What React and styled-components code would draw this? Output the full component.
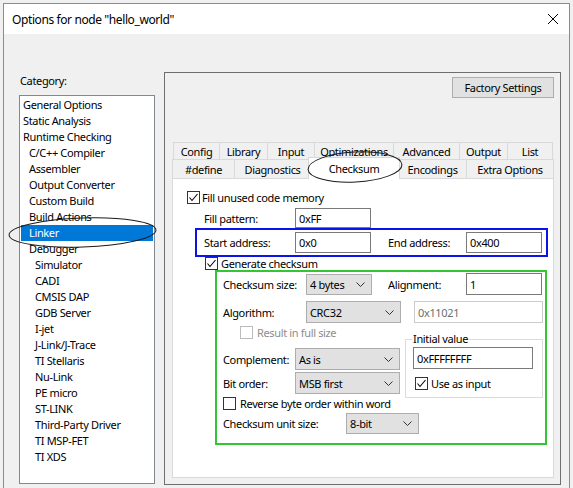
import React from 'react';
import styled, { createGlobalStyle } from 'styled-components';

const GlobalStyle = createGlobalStyle`
  *, *::before, *::after { box-sizing: border-box; }
  html, body {
    margin: 0;
    padding: 0;
    height: 488px;
    overflow: hidden;
    background: #f0f0f0;
  }
  body {
    font-family: "Noto Sans", "Open Sans", sans-serif;
    font-size: 11px;
    letter-spacing: -0.35px;
    color: #000;
  }
`;

const Window = styled.div`
  margin: 3px 0 0 3px;
  width: 567px;
  height: 485px;
  border: 1px solid #8c8c8c;
  border-bottom: none;
  background: #f0f0f0;
  display: flex;
  flex-direction: column;
  overflow: hidden;
`;

const TitleBar = styled.div`
  height: 30px;
  flex: none;
  background: #fff;
  display: flex;
  align-items: center;
  justify-content: space-between;
  padding: 0 11px 0 8px;
  font-size: 12px;
  letter-spacing: -0.4px;
`;

const Body = styled.div`
  display: flex;
  align-items: flex-start;
  gap: 9px;
  padding: 0 8px 0 15px;
`;

const LeftColumn = styled.div`
  position: relative;
  width: 136px;
  flex: none;
  padding-top: 40px;
`;

const Caption = styled.div`
  line-height: 14px;
  height: 14px;
  padding-left: 1px;
`;

const CategoryList = styled.div`
  margin-top: 7px;
  height: 389px;
  border: 1px solid #828790;
  background: #fff;
  padding-top: 1px;
`;

const CategoryItem = styled.div`
  height: 16px;
  line-height: 16px;
  margin: 0 1px;
  padding-left: ${({ $level }) => 2 + $level * 6}px;
  background: ${({ $selected }) => ($selected ? '#0078d7' : 'transparent')};
  color: ${({ $selected }) => ($selected ? '#fff' : '#000')};
  white-space: nowrap;
`;

const Annotation = styled.svg`
  position: absolute;
  left: 0;
  top: 0;
  width: 100%;
  height: 100%;
  overflow: visible;
  pointer-events: none;
  z-index: 5;
`;

const Panel = styled.div`
  width: 397px;
  height: 413px;
  margin-top: 38px;
  flex: none;
  border: 1px solid #6e6e6e;
  padding: 4px 6px 6px 7px;
  display: flex;
  flex-direction: column;
`;

const Button = styled.div`
  align-self: flex-end;
  width: 102px;
  height: 21px;
  background: #e1e1e1;
  border: 1px solid #adadad;
  display: flex;
  align-items: center;
  justify-content: center;
`;

const TabControl = styled.div`
  position: relative;
  margin-top: 44px;
`;

const TabRow = styled.div`
  display: flex;
  padding: ${({ $inset }) => ($inset ? '0 1px' : '0')};
`;

const Tab = styled.div`
  width: ${({ $w }) => $w}px;
  height: ${({ $h }) => $h}px;
  flex: none;
  background: #f0f0f0;
  border-top: 1px solid #d9d9d9;
  border-left: 1px solid #d9d9d9;
  border-right: ${({ $last }) => ($last ? '1px solid #d9d9d9' : 'none')};
  display: flex;
  align-items: center;
  justify-content: center;
  white-space: nowrap;
`;

const ActiveTab = styled.div`
  position: relative;
  z-index: 1;
  width: ${({ $w }) => $w + 4}px;
  height: 22px;
  margin: -2px -2px -1px -2px;
  flex: none;
  background: #fff;
  border: 1px solid #d9d9d9;
  border-bottom: none;
  display: flex;
  align-items: center;
  justify-content: center;
  padding-bottom: 1px;
`;

const TabPage = styled.div`
  height: 300px;
  background: #fff;
  border: 1px solid #d9d9d9;
  display: flex;
  flex-direction: column;
`;

const Row = styled.div`
  display: flex;
  align-items: center;
  flex: none;
  height: ${({ $h }) => $h}px;
  margin-top: ${({ $mt = 0 }) => $mt}px;
  padding-left: ${({ $pl = 0 }) => $pl}px;
  white-space: nowrap;
`;

const Label = styled.span`
  width: ${({ $w }) => ($w ? `${$w}px` : 'auto')};
  margin-left: ${({ $ml = 0 }) => $ml}px;
  flex: none;
  color: ${({ $disabled }) => ($disabled ? '#8d8d8d' : '#000')};
`;

const TextBox = styled.div`
  width: ${({ $w }) => $w}px;
  height: ${({ $h = 21 }) => $h}px;
  margin-left: ${({ $ml = 0 }) => $ml}px;
  flex: none;
  background: #fff;
  border: 1px solid ${({ $disabled }) => ($disabled ? '#cccccc' : '#7a7a7a')};
  color: ${({ $disabled }) => ($disabled ? '#6d6d6d' : '#000')};
  padding-left: 3px;
  display: flex;
  align-items: center;
`;

const Combo = styled.div`
  width: ${({ $w }) => $w}px;
  height: ${({ $h = 21 }) => $h}px;
  flex: none;
  background: #e1e1e1;
  border: 1px solid #adadad;
  padding: 0 6px 0 3px;
  display: flex;
  align-items: center;
  justify-content: space-between;
`;

const Box = styled.span`
  width: 13px;
  height: 13px;
  flex: none;
  background: #fff;
  border: 1px solid ${({ $disabled }) => ($disabled ? '#bcbcbc' : '#333')};
  display: flex;
  align-items: center;
  justify-content: center;
  margin-right: ${({ $gap = 3 }) => $gap}px;
`;

const BlueFrame = styled.div`
  margin-left: 22px;
  width: 353px;
  border: 2px solid #0a14e6;
  padding: 2px 0 2px 7px;
  display: flex;
  align-items: center;
`;

const GreenFrame = styled.div`
  margin-left: 42px;
  width: 332px;
  height: 175px;
  border: 2px solid #33c633;
  display: flex;
  flex-direction: column;
`;

const Split = styled.div`
  display: flex;
  margin-top: 3px;
`;

const SplitLeft = styled.div`
  width: 188px;
  display: flex;
  flex-direction: column;
`;

const GroupBox = styled.div`
  position: relative;
  margin-top: 13px;
  width: 138px;
  height: 59px;
  border: 1px solid #dcdcdc;
  padding: 7px 0 0 7px;
  display: flex;
  flex-direction: column;
`;

const Legend = styled.span`
  position: absolute;
  top: -8px;
  left: 6px;
  padding: 0 1px;
  background: #fff;
  line-height: 14px;
`;

const Chevron = () => (
  <svg width="9" height="5" viewBox="0 0 9 5">
    <path d="M0.5 0.5 L4.5 4.5 L8.5 0.5" fill="none" stroke="#333" strokeWidth="1" />
  </svg>
);

const Check = ({ checked, disabled, gap, children }) => (
  <>
    <Box $disabled={disabled} $gap={gap}>
      {checked && (
        <svg width="11" height="11" viewBox="0 0 11 11">
          <path d="M1.5 5.5 L4 8.5 L9.5 2" fill="none" stroke="#000" strokeWidth="1.1" />
        </svg>
      )}
    </Box>
    <Label $disabled={disabled}>{children}</Label>
  </>
);

const Select = ({ w, h, value }) => (
  <Combo $w={w} $h={h}>
    <span>{value}</span>
    <Chevron />
  </Combo>
);

const categories = [
  ['General Options', 0],
  ['Static Analysis', 0],
  ['Runtime Checking', 0],
  ['C/C++ Compiler', 1],
  ['Assembler', 1],
  ['Output Converter', 1],
  ['Custom Build', 1],
  ['Build Actions', 1],
  ['Linker', 1],
  ['Debugger', 1],
  ['Simulator', 2],
  ['CADI', 2],
  ['CMSIS DAP', 2],
  ['GDB Server', 2],
  ['I-jet', 2],
  ['J-Link/J-Trace', 2],
  ['TI Stellaris', 2],
  ['Nu-Link', 2],
  ['PE micro', 2],
  ['ST-LINK', 2],
  ['Third-Party Driver', 2],
  ['TI MSP-FET', 2],
  ['TI XDS', 2],
];

const backTabs = [
  ['Config', 46],
  ['Library', 48],
  ['Input', 47],
  ['Optimizations', 79],
  ['Advanced', 66],
  ['Output', 48],
  ['List', 46],
];

const frontTabs = [
  ['#define', 62],
  ['Diagnostics', 76],
  ['Checksum', 88, true],
  ['Encodings', 68],
  ['Extra Options', 88],
];

export default function App() {
  return (
    <>
      <GlobalStyle />
      <Window>
        <TitleBar>
          <span>Options for node "hello_world"</span>
          <svg width="10" height="10" viewBox="0 0 10 10">
            <path d="M0 0 L10 10 M10 0 L0 10" stroke="#000" strokeWidth="1" />
          </svg>
        </TitleBar>
        <Body>
          <LeftColumn>
            <Caption>Category:</Caption>
            <CategoryList>
              {categories.map(([name, level]) => (
                <CategoryItem key={name} $level={level} $selected={name === 'Linker'}>
                  {name}
                </CategoryItem>
              ))}
            </CategoryList>
            <Annotation>
              <ellipse cx="63.5" cy="198.5" rx="73.5" ry="14.5" transform="rotate(-2 63.5 198.5)"
                fill="none" stroke="#1a1a1a" strokeWidth="1" />
            </Annotation>
          </LeftColumn>

          <Panel>
            <Button>Factory Settings</Button>
            <TabControl>
              <TabRow $inset>
                {backTabs.map(([name, w], i) => (
                  <Tab key={name} $w={w} $h={17} $last={i === backTabs.length - 1}>{name}</Tab>
                ))}
              </TabRow>
              <TabRow>
                {frontTabs.map(([name, w, active], i) =>
                  active ? (
                    <ActiveTab key={name} $w={w}>{name}</ActiveTab>
                  ) : (
                    <Tab key={name} $w={w} $h={19} $last={i === frontTabs.length - 1}>{name}</Tab>
                  )
                )}
              </TabRow>
              <TabPage>
                <Row $h={15} $mt={11} $pl={14}>
                  <Check checked gap={2}>Fill unused code memory</Check>
                </Row>
                <Row $h={20} $mt={3} $pl={31}>
                  <Label $w={91}>Fill pattern:</Label>
                  <TextBox $w={76} $h={20}>0xFF</TextBox>
                </Row>
                <BlueFrame>
                  <Label $w={91}>Start address:</Label>
                  <TextBox $w={76}>0x0</TextBox>
                  <Label $w={78} $ml={17}>End address:</Label>
                  <TextBox $w={76}>0x400</TextBox>
                </BlueFrame>
                <Row $h={13} $pl={32}>
                  <Check checked>Generate checksum</Check>
                </Row>
                <GreenFrame>
                  <Row $h={22} $mt={1} $pl={6}>
                    <Label $w={83}>Checksum size:</Label>
                    <Select w={66} value="4 bytes" />
                    <Label $w={78} $ml={16}>Alignment:</Label>
                    <TextBox $w={76} $h={22}>1</TextBox>
                  </Row>
                  <Row $h={22} $mt={6} $pl={6}>
                    <Label $w={83}>Algorithm:</Label>
                    <Select w={95} h={22} value="CRC32" />
                    <TextBox $w={129} $h={22} $ml={13} $disabled>0x11021</TextBox>
                  </Row>
                  <Split>
                    <SplitLeft>
                      <Row $h={13} $pl={23}>
                        <Check disabled gap={4}>Result in full size</Check>
                      </Row>
                      <Row $h={22} $mt={9} $pl={6}>
                        <Label $w={72}>Complement:</Label>
                        <Select w={105} h={22} value="As is" />
                      </Row>
                      <Row $h={22} $mt={2} $pl={6}>
                        <Label $w={72}>Bit order:</Label>
                        <Select w={105} h={22} value="MSB first" />
                      </Row>
                    </SplitLeft>
                    <GroupBox>
                      <Legend>Initial value</Legend>
                      <TextBox $w={120} $h={22}>0xFFFFFFFF</TextBox>
                      <Row $h={13} $mt={8} $pl={2}>
                        <Check checked>Use as input</Check>
                      </Row>
                    </GroupBox>
                  </Split>
                  <Row $h={13} $mt={-1} $pl={6}>
                    <Check gap={4}>Reverse byte order within word</Check>
                  </Row>
                  <Row $h={21} $mt={3} $pl={6}>
                    <Label $w={123}>Checksum unit size:</Label>
                    <Select w={73} value="8-bit" />
                  </Row>
                </GreenFrame>
              </TabPage>
              <Annotation>
                <ellipse cx="183" cy="25" rx="47" ry="15" transform="rotate(-3 183 25)"
                  fill="none" stroke="#1a1a1a" strokeWidth="1" />
              </Annotation>
            </TabControl>
          </Panel>
        </Body>
      </Window>
    </>
  );
}
